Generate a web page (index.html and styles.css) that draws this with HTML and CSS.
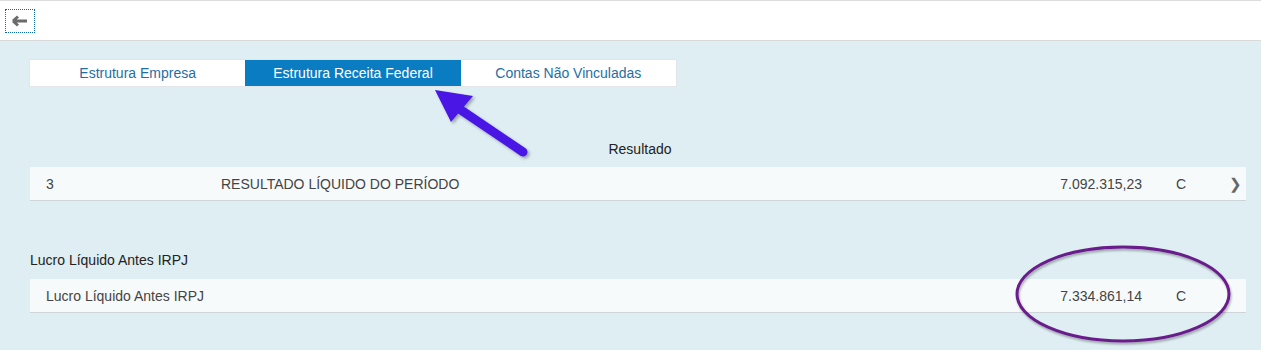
FILE: index.html
```html
<!DOCTYPE html>
<html lang="pt">
<head>
    <meta charset="UTF-8">
    <title>Estrutura Receita Federal</title>
    <link rel="stylesheet" href="styles.css">
</head>
<body>
    <header class="topbar">
        <button class="back-btn" aria-label="Voltar">
            <svg width="16" height="12" viewBox="0 0 16 12">
                <path d="M1 6 L6 1.5 M1 6 L6 10.5 M1 6 H15" stroke="#6b6b6b" stroke-width="3" fill="none" stroke-linecap="butt"/>
            </svg>
        </button>
    </header>

    <main class="content">
        <nav class="tabs">
            <a class="tab">Estrutura Empresa</a>
            <a class="tab active">Estrutura Receita Federal</a>
            <a class="tab">Contas Não Vinculadas</a>
        </nav>

        <h3 class="group-title center">Resultado</h3>
        <div class="row">
            <span class="col-code">3</span>
            <span class="col-desc">RESULTADO LÍQUIDO DO PERÍODO</span>
            <span class="col-value">7.092.315,23</span>
            <span class="col-dc">C</span>
            <span class="col-nav">&#10095;</span>
        </div>

        <h3 class="group-title">Lucro Líquido Antes IRPJ</h3>
        <div class="row">
            <span class="col-name">Lucro Líquido Antes IRPJ</span>
            <span class="col-value">7.334.861,14</span>
            <span class="col-dc">C</span>
            <span class="col-nav"></span>
        </div>
    </main>

    <!-- annotations drawn over the screenshot -->
    <svg class="mark-arrow" width="120" height="90" viewBox="0 0 120 90">
        <defs>
            <filter id="sh" x="-20%" y="-20%" width="140%" height="140%">
                <feDropShadow dx="2" dy="2" stdDeviation="1.5" flood-color="#000" flood-opacity="0.3"/>
            </filter>
        </defs>
        <g filter="url(#sh)">
            <line x1="103" y1="70" x2="38" y2="26" stroke="#4a16e6" stroke-width="9" stroke-linecap="round"/>
            <polygon points="15,8 53,14 31,40" fill="#4a16e6"/>
        </g>
    </svg>
    <svg class="mark-ellipse" width="230" height="110" viewBox="0 0 230 110">
        <defs>
            <filter id="sh2" x="-10%" y="-10%" width="120%" height="130%">
                <feDropShadow dx="1" dy="2" stdDeviation="1.2" flood-color="#000" flood-opacity="0.3"/>
            </filter>
        </defs>
        <ellipse cx="113" cy="52" rx="106" ry="47" fill="none" stroke="#6a1f8c" stroke-width="3" filter="url(#sh2)"/>
    </svg>
</body>
</html>
```

FILE: styles.css
```css
body {
    margin: 0;
    font-family: 'Liberation Sans', Arial, sans-serif;
    background: #deeef2;
    color: #333;
    font-size: 14px;
    position: relative;
    height: 350px;
    overflow: hidden;
}
.topbar {
    height: 39px;
    background: #fff;
    border-top: 1px solid #dcdcdc;
    border-bottom: 1px solid #d9d9d9;
    display: flex;
    align-items: center;
    padding-left: 5px;
}
.back-btn {
    width: 30px;
    height: 24px;
    margin-top: 1px;
    border: 1px dotted #0a6aa6;
    background: #fff;
    padding: 0;
    display: flex;
    align-items: center;
    justify-content: center;
}
.content {
    padding: 19px 15px 0 30px;
}
.tabs {
    display: flex;
    width: 646px;
    height: 26px;
    background: #fff;
    box-shadow: 0 0 0 1px #e2e6e8;
}
.tab {
    flex: 1;
    display: flex;
    align-items: center;
    justify-content: center;
    color: #1f6fa3;
    font-size: 14px;
}
.tab.active {
    background: #0a7cc1;
    color: #fff;
}
.group-title {
    margin: 0;
    font-weight: normal;
    font-size: 14px;
    color: #222;
}
.group-title.center {
    text-align: center;
    margin-top: 55px;
    height: 26px;
    line-height: 16px;
    padding-left: 4px;
}
.group-title:not(.center) {
    margin-top: 52px;
    height: 26px;
    line-height: 14px;
}
.row {
    display: flex;
    align-items: center;
    height: 33px;
    background: #f7fafb;
    border-bottom: 1px solid #cfd6d9;
    color: #444;
}
.col-code {
    width: 175px;
    padding-left: 16px;
}
.col-desc {
    flex: 1;
}
.col-name {
    flex: 1;
    padding-left: 16px;
}
.col-value {
    width: 120px;
    text-align: right;
}
.col-dc {
    width: 46px;
    padding-left: 34px;
}
.col-nav {
    width: 17px;
    padding-left: 7px;
    color: #666;
    font-family: 'DejaVu Sans', sans-serif;
    font-size: 15px;
    font-weight: bold;
}
.mark-arrow {
    position: absolute;
    left: 420px;
    top: 82px;
}
.mark-ellipse {
    position: absolute;
    left: 1010px;
    top: 242px;
}
```
